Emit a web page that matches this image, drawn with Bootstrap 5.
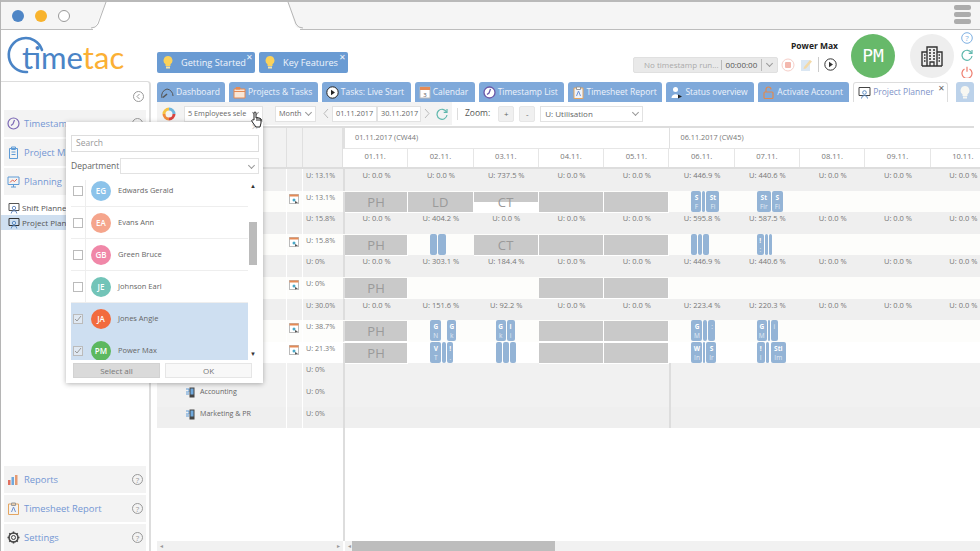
<!DOCTYPE html>
<html lang="en"><head><meta charset="utf-8"><title>TimeTac Project Planner</title>
<link href="https://cdn.jsdelivr.net/npm/bootstrap@5.3.0/dist/css/bootstrap.min.css" rel="stylesheet">
<style>
html,body{margin:0;width:980px;height:551px;overflow:hidden;background:#fff}
body{font-family:"Open Sans",sans-serif;color:#666;font-size:8px;line-height:1.2}
.app{width:980px;height:551px;border-left:1px solid #b5b5b5;position:relative;overflow:hidden}
.chromebar{height:30px;background:#f5f5f5;border-top:2px solid #b9b9b9;border-bottom:1px solid #bdbdbd;position:relative;padding:0 9px 0 11px}
.browser-tab{position:absolute;left:0;top:-2px}
.tdot{width:12px;height:12px;border-radius:50%;margin-right:11px;position:relative}
.tdot-b{background:#4f86c6}.tdot-o{background:#f8b32d}.tdot-w{background:#fff;border:1px solid #999}
.burger{width:17px;position:relative}
.burger i{display:block;height:5px;border-radius:2px;background:#acacac;margin-bottom:2px}
.headrow{height:51px;position:relative}
.logo-wrap{width:156px;height:51px;position:relative}
.logo-arc{position:absolute;left:4px;top:5px}
.logo-text{position:absolute;left:21px;top:7px;font-family:Lato,sans-serif;font-size:31px;line-height:40px;letter-spacing:0;color:#4a84c6}
.logo-text b{font-weight:400;color:#fbb034}
.quick{background:#6a9bd3;color:#f1f5fb;height:21px;border-radius:2px;font-size:9.2px;position:relative;margin-top:22px;margin-right:4px}
.quick svg{margin:0 8px 0 6px}
.xmark{position:absolute;right:2px;top:0;font-size:8px;line-height:10px;color:#eef3fa}
.who{position:absolute;left:790px;top:11px;font-weight:700;font-size:8.5px;color:#222}
.timer{position:absolute;left:632px;top:27px;width:145px;height:16px;background:#e9e9e9;border-radius:2px;border:1px solid #e0e0e0;font-size:8px;color:#aaa}
.timer span+span{border-left:1px solid #bbb;color:#555;padding:0 4px}
.timer .t1{padding-left:10px;width:89px}
.ticons{position:absolute;left:780px;top:27px}
.pm{position:absolute;left:850px;top:4px;width:44px;height:44px;border-radius:50%;background:#67b96a;color:#fff;font-family:"DejaVu Sans Mono",monospace;font-size:18px}
.bld{position:absolute;left:909px;top:4px;width:44px;height:44px;border-radius:50%;background:#eee}
.sideicons{position:absolute;left:958px;top:2px;width:16px;gap:5px}
.sidebar{width:150px;height:470px;border-top:1px solid #ddd;border-right:2px solid #ddd;border-top-right-radius:4px;flex:none;padding:0 3px;position:relative}
.collapse-ic{height:28px;padding-right:2px}
.sitem{height:27px;background:#f3f3f3;margin-bottom:2px;color:#7497d4;font-size:9.4px;padding:0 3px;white-space:nowrap;overflow:hidden}
.sitem svg:first-child{margin-right:4px;flex:none}
.sitem .hq{margin-left:auto;flex:none}
.hq{width:11px;height:11px;border-radius:50%;border:1px solid #999;font-size:8px;color:#999;line-height:9px;text-align:center}
.subitem{height:15px;margin:0 -3px;padding-left:7px;color:#555;font-size:8px;white-space:nowrap}
.subitem svg{margin-right:2px}
.subitem.first{margin-top:5px}
.subitem.on{background:#cfdff0}
.spacer-side{height:236px}
.mainpane{width:823px;padding-left:6px;flex:none}
.tabsrow{height:21px;gap:4px}
.gtab{height:20px;background:#7fa9da;color:#eef3fb;border-radius:3px 3px 0 0;padding:0 4px;font-size:8.5px;white-space:nowrap;margin-top:1px}
.gtab svg{margin-right:2px;flex:none}
.gtab.active{background:#fff;border:1px solid #ddd;border-bottom:0;color:#7f94c8;position:relative;margin-top:1px}
.gtab.bulb{background:#bcd2ea;width:18px;margin-left:4px;justify-content:center;padding:0}
.gtab.bulb svg{margin:0}
.toolbar{height:26px;border-bottom:2px solid #ddd;font-size:7.3px}
.toolgrey{background:#f3f3f3;height:23px;padding-left:5px;width:295px;flex:none}
.fld{background:#fff;border:1px solid #e2e2e2;height:16px;padding:0 3px;color:#666;white-space:nowrap;font-size:7.3px}
.fld.lg{font-size:8px;padding-left:4px}
.caret{width:5px;height:5px;border-right:1px solid #999;border-bottom:1px solid #999;transform:rotate(45deg);margin:-2px 1px 0 auto;flex:none}
.zbtn{width:16px;height:16px;background:#f0f0f0;border:1px solid #e6e6e6;text-align:center;line-height:13px;color:#666;border-radius:2px;font-size:8px}
.hrow,.grow{display:grid;grid-template-columns:130px 16px 40px repeat(11,65.3px);width:1000px}
.hrow1{height:21px}.hrow2{height:20px;border-bottom:2px solid #ddd}
.lefthead{background:#f2f2f2;border-right:1px solid #e0e0e0}
.weekc{grid-column:span 5;color:#777;padding:5px 0 0 10px;font-size:7.3px;border-bottom:1px solid #e6e6e6;border-left:2px solid #e0e0e0}
.weekc2{grid-column:span 6;border-left:1px solid #e0e0e0}
.dayc{text-align:center;color:#777;padding-top:3px;font-size:7.6px;border-right:1px solid #e6e6e6}
.grow{height:21.6px}
.grow>div{color:#777;font-size:7.5px}
.grow>.gu{font-size:7.2px}
.grow>.gn{padding-left:28px;border-right:1px solid #fff;font-size:7.1px;color:#666}
.gi{border-right:1px solid #fff;padding:3px 0 0 2px}
.gu{padding:2px 0 0 3px}
.gd{text-align:center;padding-top:2px}
.wk{border-left:2px solid #ddd}
.sh{background:#efefef}.wh{background:#fff}.cream{background:#fdfdfb}
.ts{background:#f1f1f1!important}
.grow>.hol{background:#c9c9c9;color:#9a9a9a;font-size:13px;text-align:center;line-height:20px;letter-spacing:.3px;border-right:1px solid #fff;border-bottom:1px solid #fff;margin-top:1px}
.grow>.halfc{background:linear-gradient(#c9c9c9 50%,#fff 50%)}
.tasks{padding:0 0 0 22px;gap:1px}
.tk{background:#94b4d6;border-radius:2px;height:21px;color:#fff;font-size:6.5px;font-weight:700;text-align:center;overflow:hidden;line-height:9px;padding-top:2px;flex:none}
.tk em{display:block;font-style:normal;font-weight:400;color:#e3ecf5}
.tailspace{height:113px;position:relative}
.scrolls{height:10px;background:#fff}
.sc1{width:186px;background:#f1f1f1;margin-right:2px;padding:0 3px}
.sc2{flex:1;background:#f1f1f1;position:relative;padding:0 3px}
.scthumb{width:203px;height:10px;background:#bdbdbd;margin-left:1px}
.arrow{color:#999;font-size:6px;line-height:10px}
.popup{position:absolute;left:65px;top:122px;width:197px;height:261px;background:#fff;box-shadow:0 1px 5px rgba(0,0,0,.3);padding:13px 4px 0 5px;z-index:5;font-size:8.5px}
.pclose{position:absolute;right:4px;top:0;color:#ccc;font-size:9px}
.pinput{height:17px;border:1px solid #ddd;color:#999;font-size:8.5px;padding:0 4px;margin-right:0}
.pdept{height:16px;margin:6px 0;color:#666}
.plist{height:180px;overflow:hidden;position:relative}
.plines{width:177px;margin-top:-5px}
.prow{height:32px;border-bottom:1px solid #eee;font-size:7.5px;color:#666}
.prow.sel{background:#cedff1;border-color:#cedff1}
.chkcell{width:15px;flex:none;padding-left:2px;height:100%;border-right:1px solid #eee}
.prow.sel .chkcell{border-color:#cedff1}
.chk{width:10px;height:10px;border:1px solid #bbb;background:#fff;position:relative}
.prow.sel .chk{background:#dfe8f2}
.ava{width:20px;height:20px;border-radius:50%;color:#fff;font-size:8px;font-weight:600;margin:0 7px 0 5px;flex:none}
.pscroll{width:11px;position:relative;background:#fff}
.pthumb{position:absolute;top:42px;left:1px;width:8px;height:43px;background:#bbb}
.parr{position:absolute;left:2px;font-size:6px;color:#333;line-height:6px}
.pbtns{margin-top:3px;gap:5px;padding-left:2px}
.pbtn{width:87px;height:15px;text-align:center;line-height:13px;color:#777;font-size:8px;border:1px solid #e6e6e6;background:#f8f8f8}
.pbtn.grey{background:#dadada;border-color:#d2d2d2}
.cursor{position:absolute;left:250px;top:111px;z-index:6}
</style></head><body>
<div class="app">
 <div class="chromebar d-flex align-items-center">
  <svg class="browser-tab" width="320" height="30"><path d="M105 2L95 25Q93 29 88 29H300Q296 29 294 25L287 2Z" fill="#fff" stroke="none"/><path d="M105 2L97 24Q95 28 90 28M287 2L295 24Q297 28 302 28" fill="none" stroke="#b5b5b5"/><path d="M92 29H299" stroke="#fff" stroke-width="2"/></svg>
  <span class="tdot tdot-b"></span><span class="tdot tdot-o"></span><span class="tdot tdot-w"></span>
  <div class="burger ms-auto"><i></i><i></i><i></i></div>
 </div>
 <div class="headrow d-flex">
  <div class="logo-wrap"><svg class="logo-arc" width="50" height="44"><path d="M37 15A17 17 0 1 0 22 37" fill="none" stroke="#4a84c6" stroke-width="2.6" stroke-linecap="round"/></svg><div class="logo-text">time<b>tac</b></div></div>
  <div class="quick d-flex align-items-center" style="width:98px"><svg width="10" height="13" viewBox="0 0 10 13"><path d="M5 0a4.500 4.500 0 0 0-2.500 8.200V10h5V8.200A4.500 4.500 0 0 0 5 0z" fill="#fbd25a"/><rect x="3" y="10.500" width="4" height="2" fill="#f3e3a8"/></svg>Getting Started<span class="xmark">✕</span></div>
  <div class="quick d-flex align-items-center" style="width:89px"><svg width="10" height="13" viewBox="0 0 10 13"><path d="M5 0a4.500 4.500 0 0 0-2.500 8.200V10h5V8.200A4.500 4.500 0 0 0 5 0z" fill="#fbd25a"/><rect x="3" y="10.500" width="4" height="2" fill="#f3e3a8"/></svg>Key Features<span class="xmark">✕</span></div>
  <div class="who">Power Max</div>
  <div class="timer d-flex align-items-center"><span class="t1">No timestamp run...</span><span>00:00:00</span><span class="caret-box d-flex" style="width:16px;height:12px"><i class="caret" style="margin:2px auto 0"></i></span></div>
  <div class="ticons d-flex align-items-center" style="gap:5px">
   <svg width="14" height="14" viewBox="0 0 14 14"><circle cx="7" cy="7" r="6" fill="none" stroke="#f6cfc9"/><rect x="4" y="4" width="6" height="6" rx="1" fill="#f3b8ae"/></svg>
   <svg width="12" height="14" viewBox="0 0 12 14"><rect x="1" y="2" width="9" height="11" fill="#dbe7f3"/><path d="M4 9L10 2l2 1.500-6 7-2.500.500z" fill="#f3d9a8"/></svg>
   <span style="width:1px;height:15px;background:#ccc;margin-left:1px"></span>
   <svg width="13" height="13" viewBox="0 0 13 13"><circle cx="6.500" cy="6.500" r="5.700" fill="none" stroke="#333"/><path d="M5 3.800l4 2.700-4 2.700z" fill="#333"/></svg>
  </div>
  <div class="pm d-flex align-items-center justify-content-center">PM</div>
  <div class="bld d-flex align-items-center justify-content-center"><svg width="22" height="22" viewBox="0 0 22 22" fill="none" stroke="#333"><path d="M1 21V7h5M21 21V7h-5M6 21V2h10v19M1 21h20" stroke-width="1.400"/><path d="M9 21v-4h4v4M8 5h2M12 5h2M8 8h2M12 8h2M8 11h2M12 11h2M8 14h2M12 14h2M3 10h1.500M3 13h1.500M3 16h1.500M17.500 10H19M17.500 13H19M17.500 16H19" stroke-width="1.300"/></svg></div>
  <div class="sideicons d-flex flex-column align-items-center">
   <svg width="12" height="12" viewBox="0 0 12 12"><circle cx="6" cy="6" r="5.300" fill="none" stroke="#7eb0e2"/><text x="6" y="9" text-anchor="middle" font-size="8" fill="#7eb0e2" font-family="Open Sans">?</text></svg>
   <svg width="12" height="12" viewBox="0 0 12 12" fill="none" stroke="#5fb8ad" stroke-width="1.200"><path d="M10.500 4A5 5 0 1 0 11 7"/><path d="M11 1v3.300H7.700"/></svg>
   <svg width="12" height="12" viewBox="0 0 12 12" fill="none" stroke="#ee7d6e" stroke-width="1.200"><path d="M3.500 3A5 5 0 1 0 8.500 3M6 .8v5"/></svg>
  </div>
 </div>
 <div class="d-flex">
  <aside class="sidebar">
   <div class="collapse-ic d-flex align-items-center justify-content-end"><svg width="11" height="11" viewBox="0 0 11 11" fill="none" stroke="#999"><circle cx="5.500" cy="5.500" r="5"/><path d="M6.500 3L4 5.500 6.500 8"/></svg></div>
   <div class="sitem d-flex align-items-center"><svg width="13" height="13" viewBox="0 0 13 13" fill="none" stroke="#7b68b5" stroke-width="1.200"><circle cx="6.500" cy="6.500" r="5.500"/><path d="M7.500 3L6 7 4 8.500"/></svg>Timestamps<span class="hq">?</span></div>
   <div class="sitem d-flex align-items-center"><svg width="13" height="13" viewBox="0 0 13 13" fill="none" stroke="#5f9bd6"><path d="M2.500 2.500h8v10h-8z"/><path d="M4.500 1h4v2.500h-4zM4.500 6h4M4.500 8.500h4"/></svg>Project Management</div>
   <div class="sitem d-flex align-items-center"><svg width="13" height="13" viewBox="0 0 13 13" fill="none" stroke="#5f9bd6"><path d="M1 2h11v7.500H1zM6.500 9.500V12M4 12h5"/><path d="M3 7.500l2.500-2.500 2 1.500L10 4" stroke="#e0604f"/></svg>Planning</div>
   <div class="subitem first d-flex align-items-center"><svg width="12" height="12" viewBox="0 0 12 12" fill="none" stroke="#555"><path d="M1 1.500h10v7H1z"/><circle cx="6" cy="6" r="1.700" stroke="#6b8dc2"/><path d="M3.200 11.500a2.800 2.800 0 0 1 5.600 0" stroke="#6b8dc2"/></svg>Shift Planner</div>
   <div class="subitem on d-flex align-items-center"><svg width="12" height="12" viewBox="0 0 12 12" fill="none" stroke="#333"><path d="M1 1.500h10v7H1z"/><circle cx="6" cy="6" r="1.700" stroke="#5f8ec4"/><path d="M3.200 11.500a2.800 2.800 0 0 1 5.600 0" stroke="#5f8ec4"/></svg>Project Planner</div>
   <div class="spacer-side"></div>
   <div class="sitem d-flex align-items-center"><svg width="13" height="13" viewBox="0 0 13 13"><rect x="1" y="7" width="2.500" height="5" fill="#e0705f"/><rect x="4.500" y="4" width="2.500" height="8" fill="#6fa8dc"/><rect x="8" y="2" width="2.500" height="10" fill="#e59a72"/></svg>Reports<span class="hq">?</span></div>
   <div class="sitem d-flex align-items-center"><svg width="13" height="13" viewBox="0 0 13 13" fill="none" stroke="#e3a561"><path d="M1.500 2h10v10.500h-10z"/><path d="M4.500 1h4v2.500h-4z" stroke="#999"/><path d="M4.500 10l2-5 2 5" stroke="#6f92d2"/></svg>Timesheet Report<span class="hq">?</span></div>
   <div class="sitem d-flex align-items-center"><svg width="13" height="13" viewBox="0 0 13 13" fill="none" stroke="#444"><circle cx="6.500" cy="6.500" r="2"/><circle cx="6.500" cy="6.500" r="4.500" stroke-width="1.500"/><path d="M6.500.5v2M6.500 10.500v2M.5 6.500h2M10.500 6.500h2M2.300 2.300l1.400 1.400M9.300 9.300l1.400 1.400M2.300 10.700l1.400-1.400M9.300 3.700l1.400-1.400" stroke-width="1.500"/></svg>Settings<span class="hq">?</span></div>
  </aside>
  <main class="mainpane">
   <div class="tabsrow d-flex">
    <div class="gtab d-flex align-items-center" style="width:68px"><svg width="13" height="13" viewBox="0 0 13 13" fill="none" stroke="#555"><path d="M1 12A7 7 0 0 1 6 3a7 7 0 0 1 6 7"/><path d="M2 11.500L6 8" stroke-width="1.500"/></svg>Dashboard</div>
    <div class="gtab d-flex align-items-center" style="width:89px"><svg width="13" height="13" viewBox="0 0 13 13" fill="#f9e6d6" stroke="#e58a55"><path d="M1 3h11v9H1z"/><path d="M1 5.500h11" /><path d="M3 1.500h4V3H3z" fill="#e58a55"/></svg>Projects &amp; Tasks</div>
    <div class="gtab d-flex align-items-center" style="width:89px"><svg width="13" height="13" viewBox="0 0 13 13"><circle cx="6.500" cy="6.500" r="5.700" fill="#fff" stroke="#222"/><path d="M5 3.800l4 2.700-4 2.700z" fill="#222"/></svg>Tasks: Live Start</div>
    <div class="gtab d-flex align-items-center" style="width:60px"><svg width="12" height="13" viewBox="0 0 12 13"><rect x="1" y="1" width="10" height="11" fill="#fff" stroke="#bbb"/><rect x="1" y="1" width="10" height="3" fill="#e58a55"/><text x="6" y="10.500" font-size="6" text-anchor="middle" fill="#555" font-family="Open Sans">3</text></svg>Calendar</div>
    <div class="gtab d-flex align-items-center" style="width:85px"><svg width="13" height="13" viewBox="0 0 13 13" fill="#fff" stroke="#6a58a8" stroke-width="1.300"><circle cx="6.500" cy="6.500" r="5.500"/><path d="M7.500 3L6 7 4 8.500" fill="none"/></svg>Timestamp List</div>
    <div class="gtab d-flex align-items-center" style="width:95px"><svg width="13" height="13" viewBox="0 0 13 13" fill="#eef3fb" stroke="#e3a561"><path d="M2 2h9v10.500H2z"/><path d="M4.500 1h4v2.500h-4z" fill="#fff" stroke="#999"/><path d="M4.500 10l2-5 2 5" stroke="#6f92d2" fill="none"/></svg>Timesheet Report</div>
    <div class="gtab d-flex align-items-center" style="width:88px"><svg width="13" height="13" viewBox="0 0 13 13"><circle cx="5.500" cy="3.500" r="2.500" fill="#fff"/><path d="M1.500 12c0-5 8-5 8 0z" fill="#fff"/><path d="M8 8.500l4 2-4 2z" fill="#222"/></svg>Status overview</div>
    <div class="gtab d-flex align-items-center" style="width:91px"><svg width="13" height="13" viewBox="0 0 13 13" fill="none" stroke="#e08a50" stroke-width="1.200"><rect x="2" y="6" width="9" height="6.500" rx="1"/><path d="M4 6V3.500a2.500 2.500 0 0 1 5 0"/></svg>Activate Account</div>
    <div class="gtab active d-flex align-items-center" style="width:95px"><svg width="13" height="13" viewBox="0 0 13 13" fill="none" stroke="#444"><path d="M1 1.500h11v8H1z"/><circle cx="6.500" cy="6.500" r="1.800" stroke="#5f8ec4"/><path d="M3.500 12.500a3 3 0 0 1 6 0" stroke="#5f8ec4"/></svg>Project Planner<span class="xmark" style="color:#666">✕</span></div>
    <div class="gtab bulb d-flex align-items-center"><svg width="10" height="13" viewBox="0 0 10 13"><path d="M5 0a4.500 4.500 0 0 0-2.500 8.200V10h5V8.200A4.500 4.500 0 0 0 5 0z" fill="#f7f7f2"/><rect x="3" y="10.500" width="4" height="2" fill="#f7f7f2"/></svg></div>
   </div>
   <div class="toolbar d-flex align-items-start">
    <div class="toolgrey d-flex align-items-center">
     <svg width="14" height="14" viewBox="0 0 14 14" fill="none" stroke-width="3"><path d="M7 2a5 5 0 0 1 5 5" stroke="#6fb6dd"/><path d="M12 7a5 5 0 0 1-5 5" stroke="#d9443f"/><path d="M7 12a5 5 0 0 1-5-5" stroke="#f08a3c"/><path d="M2 7a5 5 0 0 1 5-5" stroke="#f6c344"/></svg>
     <div class="fld d-flex align-items-center ms-2" style="width:79px">5 Employees sele<i class="caret"></i></div>
     <div class="fld d-flex align-items-center" style="width:41px;margin-left:12px">Month<i class="caret"></i></div>
     <svg class="ms-1" width="12" height="15" viewBox="0 0 12 15" fill="none" stroke="#bbb"><path d="M8 3L4 7.500 8 12"/></svg>
     <div class="fld d-flex align-items-center" style="width:45px">01.11.2017</div>
     <div class="fld d-flex align-items-center" style="width:44px">30.11.2017</div>
     <svg width="11" height="15" viewBox="0 0 11 15" fill="none" stroke="#bbb"><path d="M4 3l4 4.500L4 12"/></svg>
     <svg class="ms-1" width="12" height="12" viewBox="0 0 12 12" fill="none" stroke="#5fb8ad" stroke-width="1.200"><path d="M10.500 4A5 5 0 1 0 11 7"/><path d="M11 1v3.300H7.700"/></svg>
    </div>
    <div class="d-flex align-items-center" style="height:23px"><span style="width:1px;height:12px;background:#ddd;margin:0 7px 0 5px"></span><span style="color:#555;font-size:8.5px;margin-right:8px">Zoom:</span><div class="zbtn">+</div><div class="zbtn" style="margin:0 5px">-</div><div class="fld lg d-flex align-items-center" style="width:103px">U: Utilisation<i class="caret"></i></div></div>
   </div>
   <div class="gantt" style="width:823px;overflow:hidden">
    <div class="hrow hrow1"><div class="lefthead"></div><div class="lefthead"></div><div class="lefthead"></div><div class="weekc">01.11.2017 (CW44)</div><div class="weekc weekc2">06.11.2017 (CW45)</div></div>
    <div class="hrow hrow2"><div class="lefthead"></div><div class="lefthead"></div><div class="lefthead"></div><div class="dayc">01.11.</div><div class="dayc">02.11.</div><div class="dayc">03.11.</div><div class="dayc">04.11.</div><div class="dayc">05.11.</div><div class="dayc">06.11.</div><div class="dayc">07.11.</div><div class="dayc">08.11.</div><div class="dayc">09.11.</div><div class="dayc">10.11.</div><div class="dayc">11.11.</div></div>
    <div class="grow sh"><div class="gn"></div><div class="gi"></div><div class="gu">U: 13.1%</div><div class="gd wk">U: 0.0 %</div><div class="gd">U: 0.0 %</div><div class="gd">U: 737.5 %</div><div class="gd">U: 0.0 %</div><div class="gd">U: 0.0 %</div><div class="gd">U: 446.9 %</div><div class="gd">U: 440.6 %</div><div class="gd">U: 0.0 %</div><div class="gd">U: 0.0 %</div><div class="gd">U: 0.0 %</div></div>
    <div class="grow cream"><div class="gn"></div><div class="gi"><svg width="10" height="10" viewBox="0 0 10 10"><use href="#pi"/></svg></div><div class="gu">U: 13.1%</div><div class="hol wk">PH</div><div class="hol">LD</div><div class="hol halfc">CT</div><div class="hol"></div><div class="hol"></div><div class="tasks d-flex"><div class="tk" style="width:10px">S<em>F</em></div><div class="tk" style="width:3px"></div><div class="tk" style="width:13px">St<em>Fi</em></div></div><div class="tasks d-flex"><div class="tk" style="width:14px">St<em>Fir</em></div><div class="tk" style="width:11px">S<em>Fi</em></div></div><div></div><div></div><div></div></div>
    <div class="grow sh"><div class="gn"></div><div class="gi"></div><div class="gu">U: 15.8%</div><div class="gd wk">U: 0.0 %</div><div class="gd">U: 404.2 %</div><div class="gd">U: 0.0 %</div><div class="gd">U: 0.0 %</div><div class="gd">U: 0.0 %</div><div class="gd">U: 595.8 %</div><div class="gd">U: 587.5 %</div><div class="gd">U: 0.0 %</div><div class="gd">U: 0.0 %</div><div class="gd">U: 0.0 %</div></div>
    <div class="grow cream"><div class="gn"></div><div class="gi"><svg width="10" height="10" viewBox="0 0 10 10"><use href="#pi"/></svg></div><div class="gu">U: 15.8%</div><div class="hol wk">PH</div><div class="tasks d-flex"><div class="tk" style="width:7px"></div><div class="tk" style="width:8px"></div></div><div class="hol">CT</div><div class="hol"></div><div class="hol"></div><div class="tasks d-flex"><div class="tk" style="width:6px"></div><div class="tk" style="width:4px"></div><div class="tk" style="width:6px"></div></div><div class="tasks d-flex"><div class="tk" style="width:7px">!<em>:</em></div><div class="tk" style="width:3px"></div><div class="tk" style="width:3px"></div></div><div></div><div></div><div></div></div>
    <div class="grow sh"><div class="gn"></div><div class="gi"></div><div class="gu">U: 0%</div><div class="gd wk">U: 0.0 %</div><div class="gd">U: 303.1 %</div><div class="gd">U: 184.4 %</div><div class="gd">U: 0.0 %</div><div class="gd">U: 0.0 %</div><div class="gd">U: 446.9 %</div><div class="gd">U: 440.6 %</div><div class="gd">U: 0.0 %</div><div class="gd">U: 0.0 %</div><div class="gd">U: 0.0 %</div></div>
    <div class="grow cream"><div class="gn"></div><div class="gi"><svg width="10" height="10" viewBox="0 0 10 10"><use href="#pi"/></svg></div><div class="gu">U: 0%</div><div class="hol wk">PH</div><div></div><div></div><div class="hol"></div><div class="hol"></div><div></div><div></div><div></div><div></div><div></div></div>
    <div class="grow sh"><div class="gn"></div><div class="gi"></div><div class="gu">U: 30.0%</div><div class="gd wk">U: 0.0 %</div><div class="gd">U: 151.6 %</div><div class="gd">U: 92.2 %</div><div class="gd">U: 0.0 %</div><div class="gd">U: 0.0 %</div><div class="gd">U: 223.4 %</div><div class="gd">U: 220.3 %</div><div class="gd">U: 0.0 %</div><div class="gd">U: 0.0 %</div><div class="gd">U: 0.0 %</div></div>
    <div class="grow cream"><div class="gn"></div><div class="gi"><svg width="10" height="10" viewBox="0 0 10 10"><use href="#pi"/></svg></div><div class="gu">U: 38.7%</div><div class="hol wk">PH</div><div class="tasks d-flex"><div class="tk" style="width:11px">G<em>N</em></div><div class="tk" style="width:9px;margin-left:5px">G<em>k</em></div></div><div class="tasks d-flex"><div class="tk" style="width:10px">G<em>k</em></div><div class="tk" style="width:8px">i<em>i</em></div></div><div class="hol"></div><div class="hol"></div><div class="tasks d-flex"><div class="tk" style="width:11px">G<em>M</em></div><div class="tk" style="width:4px"></div><div class="tk" style="width:7px"><em>:</em></div></div><div class="tasks d-flex"><div class="tk" style="width:10px">G<em>M</em></div><div class="tk" style="width:2px"></div><div class="tk" style="width:7px"><em>i</em></div></div><div></div><div></div><div></div></div>
    <div class="grow wh"><div class="gn"></div><div class="gi"><svg width="10" height="10" viewBox="0 0 10 10"><use href="#pi"/></svg></div><div class="gu">U: 21.3%</div><div class="hol wk">PH</div><div class="tasks d-flex"><div class="tk" style="width:11px">V<em>T</em></div><div class="tk" style="width:4px"></div><div class="tk" style="width:6px">!<em>.</em></div></div><div class="tasks d-flex"><div class="tk" style="width:6px"></div><div class="tk" style="width:6px"></div><div class="tk" style="width:6px"></div></div><div class="hol"></div><div class="hol"></div><div class="tasks d-flex"><div class="tk" style="width:11px">W<em>In</em></div><div class="tk" style="width:2px"></div><div class="tk" style="width:10px">S<em>Ir</em></div></div><div class="tasks d-flex"><div class="tk" style="width:8px">!<em>I</em></div><div class="tk" style="width:3px"></div><div class="tk" style="width:15px;margin-left:1px">Sti<em>Im</em></div></div><div></div><div></div><div></div></div>
    <div class="grow sh ts"><div class="gn"></div><div class="gi"></div><div class="gu">U: 0%</div><div class="wk" style="grid-column:span 5"></div><div class="wk" style="grid-column:span 6"></div></div>
    <div class="grow sh ts"><div class="gn d-flex align-items-start" style="padding-top:2px"><svg width="11" height="11" viewBox="0 0 11 11" class="me-1"><use href="#ti"/></svg>Accounting</div><div class="gi"></div><div class="gu">U: 0%</div><div class="wk" style="grid-column:span 5"></div><div class="wk" style="grid-column:span 6"></div></div>
    <div class="grow sh"><div class="gn d-flex align-items-start" style="padding-top:2px"><svg width="11" height="11" viewBox="0 0 11 11" class="me-1"><use href="#ti"/></svg>Marketing &amp; PR</div><div class="gi"></div><div class="gu">U: 0%</div><div class="wk" style="grid-column:span 5"></div><div class="wk" style="grid-column:span 6"></div></div>
    <div class="tailspace d-flex"><div style="width:186px"></div><div style="width:2px;background:#ddd"></div></div>
    <div class="scrolls d-flex"><div class="sc1 d-flex justify-content-between align-items-center arrow"><span>◂</span><span>▸</span></div><div class="sc2 d-flex align-items-center arrow"><span>◂</span><div class="scthumb"></div></div></div>
   </div>
  </main>
 </div>
 <div class="popup">
  <span class="pclose">✕</span>
  <div class="pinput d-flex align-items-center">Search</div>
  <div class="pdept d-flex align-items-center"><span style="width:49px;flex:none">Department</span><div class="fld d-flex align-items-center flex-grow-1"><i class="caret"></i></div></div>
  <div class="plist d-flex">
   <div class="plines">
    <div class="prow d-flex align-items-center"><div class="chkcell d-flex align-items-center"><span class="chk"></span></div><span class="ava d-flex align-items-center justify-content-center" style="background:#8cc3ea">EG</span>Edwards Gerald</div>
    <div class="prow d-flex align-items-center"><div class="chkcell d-flex align-items-center"><span class="chk"></span></div><span class="ava d-flex align-items-center justify-content-center" style="background:#f5a58c">EA</span>Evans Ann</div>
    <div class="prow d-flex align-items-center"><div class="chkcell d-flex align-items-center"><span class="chk"></span></div><span class="ava d-flex align-items-center justify-content-center" style="background:#f087a8">GB</span>Green Bruce</div>
    <div class="prow d-flex align-items-center"><div class="chkcell d-flex align-items-center"><span class="chk"></span></div><span class="ava d-flex align-items-center justify-content-center" style="background:#72c4b8">JE</span>Johnson Earl</div>
    <div class="prow sel d-flex align-items-center"><div class="chkcell d-flex align-items-center"><span class="chk d-flex"><svg width="8" height="8" viewBox="0 0 8 8" fill="none" stroke="#999"><path d="M1 4l2 2 4-5"/></svg></span></div><span class="ava d-flex align-items-center justify-content-center" style="background:#f26b3e">JA</span>Jones Angie</div>
    <div class="prow sel d-flex align-items-center"><div class="chkcell d-flex align-items-center"><span class="chk d-flex"><svg width="8" height="8" viewBox="0 0 8 8" fill="none" stroke="#999"><path d="M1 4l2 2 4-5"/></svg></span></div><span class="ava d-flex align-items-center justify-content-center" style="background:#5cb85f">PM</span>Power Max</div>
   </div>
   <div class="pscroll"><span class="parr" style="top:3px">▲</span><span class="pthumb"></span><span class="parr" style="bottom:3px">▼</span></div>
  </div>
  <div class="pbtns d-flex"><div class="pbtn grey">Select all</div><div class="pbtn">OK</div></div>
 </div>
 <svg class="cursor" width="13" height="17" viewBox="0 0 13 17" fill="#fff" stroke="#222"><path d="M3 9V2a1 1 0 0 1 2 0v5l1-.500 1 .300 1 .200 1 .300 1 .700V12l-1 4H5L2 12 .800 10c-.500-1 1-1.500 2.200-1z"/><path d="M6 7v3M8 7.500V10M10 8v2" fill="none"/></svg>
 <svg width="0" height="0" style="position:absolute"><defs>
  <symbol id="pi" viewBox="0 0 10 10"><rect x=".5" y=".5" width="9" height="9" fill="#fff" stroke="#bbb"/><rect x=".5" y=".5" width="9" height="2" fill="#e58a55"/><circle cx="5" cy="6" r="1.500" fill="#4aa8c7"/><path d="M6 7l3 1.500L6 9.500z" fill="#555"/></symbol>
  <symbol id="ti" viewBox="0 0 11 11"><path d="M1 2h3v3H1M1 7h3" fill="none" stroke="#5f9bd6"/><rect x="4.500" y=".5" width="5" height="10" fill="#444"/><rect x="5.500" y="1.500" width="3" height="6" fill="#6fa8dc"/></symbol>
 </defs></svg>
</div>
<script src="https://cdn.jsdelivr.net/npm/bootstrap@5.3.0/dist/js/bootstrap.bundle.min.js"></script>
</body></html>
